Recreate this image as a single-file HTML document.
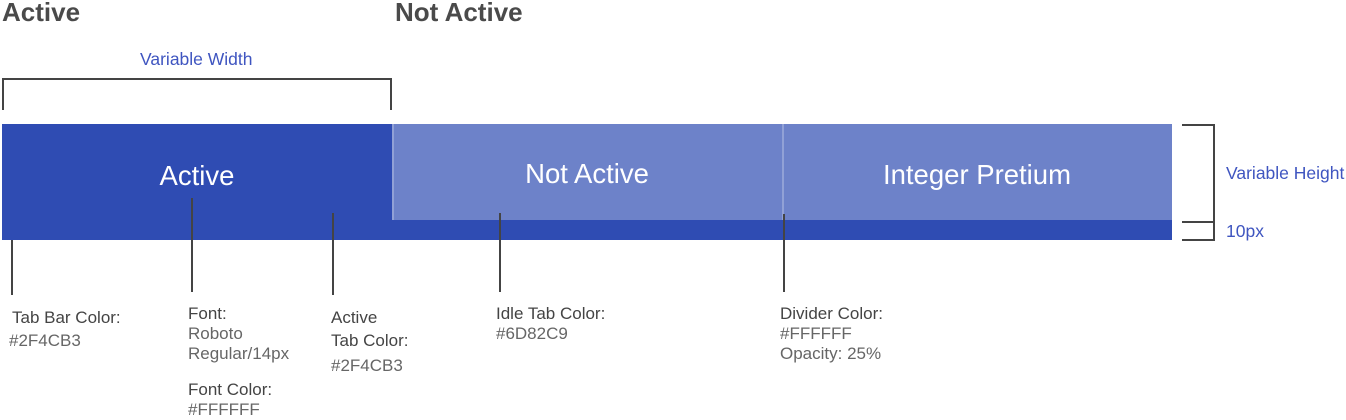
<!DOCTYPE html>
<html><head><style>
body{margin:0;width:1346px;height:416px;background:#fff;position:relative;overflow:hidden;font-family:"Liberation Sans",sans-serif}
div,span{position:absolute}
.h{font-weight:bold;font-size:26px;color:#4a4a4a;top:-3px}
.l{background:#444}
.t{font-size:17px;color:#444;line-height:20px;white-space:nowrap}
.v{color:#666}
.b{font-size:17.5px;color:#3f55c0;white-space:nowrap}
.tab{color:#fff;font-size:27.5px;text-align:center;white-space:nowrap}
</style></head><body>
<span class="h" style="left:2px">Active</span>
<span class="h" style="left:395px">Not Active</span>
<span class="b" style="left:140px;top:49px">Variable Width</span>
<div class="l" style="left:2px;top:78px;width:390px;height:2px"></div>
<div class="l" style="left:2px;top:78px;width:2px;height:32px"></div>
<div class="l" style="left:390px;top:78px;width:2px;height:32px"></div>

<div style="left:2px;top:124px;width:1170px;height:116px;background:#2F4CB3"></div>
<div style="left:392px;top:124px;width:780px;height:96px;background:#6D82C9"></div>
<div style="left:392px;top:124px;width:2px;height:96px;background:rgba(255,255,255,.25)"></div>
<div style="left:782px;top:124px;width:2px;height:96px;background:rgba(255,255,255,.25)"></div>
<span class="tab" style="left:2px;width:390px;top:160px">Active</span>
<span class="tab" style="left:392px;width:390px;top:158px">Not Active</span>
<span class="tab" style="left:782px;width:390px;top:159px">Integer Pretium</span>

<div class="l" style="left:1182px;top:124px;width:33px;height:2px"></div>
<div class="l" style="left:1213px;top:124px;width:2px;height:117px"></div>
<div class="l" style="left:1182px;top:221px;width:33px;height:2px"></div>
<div class="l" style="left:1182px;top:239px;width:33px;height:2px"></div>
<span class="b" style="left:1226px;top:163px">Variable Height</span>
<span class="b" style="left:1226px;top:221px">10px</span>

<div class="l" style="left:11px;top:240px;width:2px;height:55px"></div>
<div class="l" style="left:191px;top:198px;width:2px;height:94px"></div>
<div class="l" style="left:332px;top:213px;width:2px;height:82px"></div>
<div class="l" style="left:499px;top:213px;width:2px;height:79px"></div>
<div class="l" style="left:783px;top:214px;width:2px;height:78px"></div>

<div class="t" style="left:12px;top:308px">Tab Bar Color:</div>
<div class="t v" style="left:9px;top:331px">#2F4CB3</div>
<div class="t" style="left:188px;top:304px">Font:</div>
<div class="t v" style="left:188px;top:324px">Roboto<br>Regular/14px</div>
<div class="t" style="left:188px;top:380px">Font Color:</div>
<div class="t v" style="left:188px;top:400px">#FFFFFF</div>
<div class="t" style="left:331px;top:308px">Active</div>
<div class="t" style="left:331px;top:331px">Tab Color:</div>
<div class="t v" style="left:331px;top:356px">#2F4CB3</div>
<div class="t" style="left:496px;top:304px">Idle Tab Color:</div>
<div class="t v" style="left:496px;top:324px">#6D82C9</div>
<div class="t" style="left:780px;top:304px">Divider Color:</div>
<div class="t v" style="left:780px;top:324px">#FFFFFF<br>Opacity: 25%</div>
</body></html>
